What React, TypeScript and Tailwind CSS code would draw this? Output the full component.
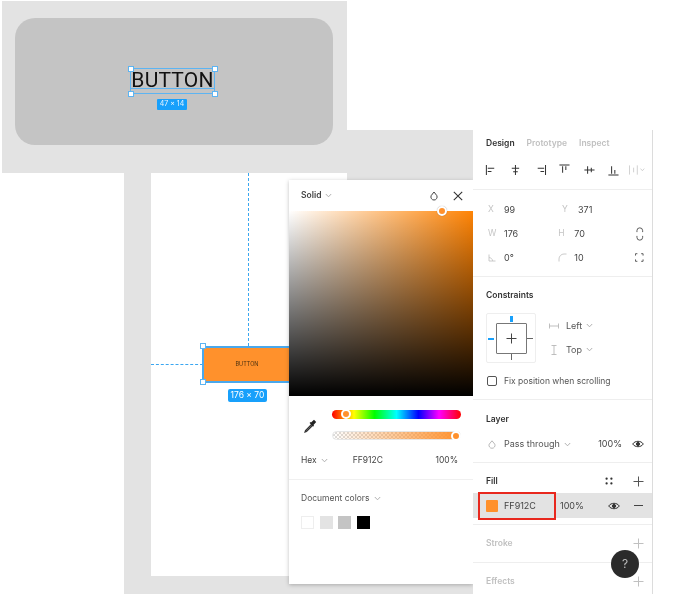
import React from "react";

const Chev = ({ className = "" }: { className?: string }) => (
  <svg width="7" height="5" viewBox="0 0 7 5" className={className} fill="none" stroke="#a8a8a8" strokeWidth="0.9">
    <path d="M0.8 1 L3.5 3.8 L6.2 1" />
  </svg>
);

const Handle = ({ className }: { className: string }) => (
  <div className={`absolute w-[6px] h-[6px] bg-white border border-[#5db4f2] ${className}`} />
);

const AlignIcon = ({ d }: { d: string }) => (
  <svg width="14" height="14" viewBox="0 0 14 14" fill="none" stroke="#333" strokeWidth="1.1">
    <path d={d} />
  </svg>
);

const Plus = ({ color = "#555" }: { color?: string }) => (
  <svg width="11" height="11" viewBox="0 0 11 11" fill="none" stroke={color} strokeWidth="1">
    <path d="M5.5 0.5V10.5M0.5 5.5H10.5" />
  </svg>
);

const Eye = () => (
  <svg width="12" height="8" viewBox="0 0 12 8" fill="none" stroke="#333" strokeWidth="1">
    <path d="M0.7 4 C3 0.4 9 0.4 11.3 4 C9 7.6 3 7.6 0.7 4Z" />
    <circle cx="6" cy="4" r="1.6" fill="#333" />
  </svg>
);

const Field = ({ label, value, icon }: { label?: string; value: string; icon?: React.ReactNode }) => (
  <div className="flex items-center w-[74px]">
    <span className="w-[16px] text-[8.5px] text-[#c4c4c4] flex items-center">{icon ?? label}</span>
    <span className="text-[9px] text-[#444]">{value}</span>
  </div>
);

function Panel() {
  return (
    <div className="absolute left-[473px] top-[130px] w-[180px] h-[464px] bg-white border-r border-[#dcdcdc] flex flex-col font-['Inter',sans-serif]">
      <section className="h-[60px] border-b border-[#eeeeee] pl-[13px] pr-[6px] pt-[7px]">
        <div className="flex gap-[12px] text-[8.5px] font-semibold leading-[12px]">
          <span className="text-[#333]">Design</span>
          <span className="text-[#c0c0c0]">Prototype</span>
          <span className="text-[#c0c0c0]">Inspect</span>
        </div>
        <div className="flex items-center mt-[14px] gap-[11.5px] -ml-[1px]">
          <AlignIcon d="M1.5 1.5V12.5M3 5H10M3 8.5H7" />
          <AlignIcon d="M7 1.5V12.5M3 5H11M4.5 9H9.5" />
          <AlignIcon d="M12.5 1.5V12.5M4 5H11M7 8.5H11" />
          <AlignIcon d="M1.5 1.5H12.5M5 3V10M8.5 3V7" />
          <AlignIcon d="M1.5 7H12.5M5 3V11M9 4.5V9.5" />
          <AlignIcon d="M1.5 12.5H12.5M5 3V11M8.5 7V11" />
          <svg width="18" height="12" viewBox="0 0 18 12" fill="none" stroke="#c8c8c8" strokeWidth="0.9" className="-ml-[2px]">
            <path d="M0.5 1V11M5 3.5V8.5M9 1V11M12.5 4.5L14.5 6.8L16.5 4.5" />
          </svg>
        </div>
      </section>
      <section className="h-[87px] border-b border-[#eeeeee] pl-[15px] pr-[8px] pt-[12px] flex flex-col gap-[9px] relative">
        <div className="flex h-[15px] gap-[0px]">
          <Field label="X" value="99" />
          <Field label="Y" value="371" />
        </div>
        <div className="flex h-[15px] items-center">
          <Field label="W" value="176" />
          <Field label="H" value="70" />
          <svg width="8" height="14" viewBox="0 0 8 14" fill="none" stroke="#555" strokeWidth="1" className="ml-[8px]">
            <path d="M1 5V3.5a3 3 0 0 1 6 0V5M1 9v1.5a3 3 0 0 0 6 0V9" />
          </svg>
        </div>
        <div className="flex h-[15px] items-center">
          <Field
            value="0°"
            icon={
              <svg width="8" height="8" viewBox="0 0 8 8" fill="none" stroke="#c4c4c4" strokeWidth="0.9">
                <path d="M1 0.5V7H7.5M1 3.5C3 3.7 4.4 5 4.7 7" />
              </svg>
            }
          />
          <Field
            value="10"
            icon={
              <svg width="9" height="9" viewBox="0 0 9 9" fill="none" stroke="#c4c4c4" strokeWidth="0.9">
                <path d="M1 8.5V6A5 5 0 0 1 6 1H8.5" />
              </svg>
            }
          />
          <svg width="9" height="9" viewBox="0 0 9 9" fill="none" stroke="#555" strokeWidth="1" className="ml-[7px]">
            <path d="M0.5 2.5V0.5H2.5M6.5 0.5H8.5V2.5M8.5 6.5V8.5H6.5M2.5 8.5H0.5V6.5" />
          </svg>
        </div>
      </section>
      <section className="h-[123px] border-b border-[#eeeeee] pl-[13px] pt-[12px]">
        <div className="text-[8.5px] font-semibold text-[#333] leading-[12px]">Constraints</div>
        <div className="flex mt-[12px]">
          <div className="relative w-[50px] h-[50px] border border-[#eeeeee] rounded-[2px] flex items-center justify-center">
            <div className="w-[31px] h-[31px] border border-[#777] rounded-[1px] flex items-center justify-center">
              <Plus color="#444" />
            </div>
            <div className="absolute left-[23px] top-[2px] w-[2.5px] h-[6px] bg-[#18a0fb]" />
            <div className="absolute left-[1px] top-[23.5px] w-[6px] h-[2px] bg-[#18a0fb]" />
            <div className="absolute left-[24px] bottom-[2px] w-[1px] h-[6px] bg-[#666]" />
            <div className="absolute right-[2px] top-[24px] w-[6px] h-[1px] bg-[#666]" />
          </div>
          <div className="ml-[13px] flex flex-col gap-[9px] pt-[5px] text-[9px] text-[#555]">
            <div className="flex items-center h-[15px]">
              <svg width="10" height="6" viewBox="0 0 10 6" fill="none" stroke="#b8b8b8" strokeWidth="0.9" className="mr-[7px]">
                <path d="M0.5 0.5V5.5M9.5 0.5V5.5M0.5 3H9.5" />
              </svg>
              <span className="mr-[4px]">Left</span>
              <Chev />
            </div>
            <div className="flex items-center h-[15px]">
              <svg width="6" height="10" viewBox="0 0 6 10" fill="none" stroke="#b8b8b8" strokeWidth="0.9" className="ml-[2px] mr-[9px]">
                <path d="M0.5 0.5H5.5M0.5 9.5H5.5M3 0.5V9.5" />
              </svg>
              <span className="mr-[4px]">Top</span>
              <Chev />
            </div>
          </div>
        </div>
        <div className="flex items-center mt-[10px] h-[16px]">
          <div className="w-[10px] h-[10px] border border-[#555] rounded-[2px] ml-[1px] mr-[7px]" />
          <span className="text-[8.5px] text-[#555]">Fix position when scrolling</span>
        </div>
      </section>
      <section className="h-[63px] border-b border-[#eeeeee] pl-[13px] pr-[8px] pt-[13px]">
        <div className="text-[8.5px] font-semibold text-[#333] leading-[12px]">Layer</div>
        <div className="flex items-center mt-[12px] h-[14px] text-[9px] text-[#555]">
          <svg width="8" height="9" viewBox="0 0 8 9" fill="none" stroke="#b0b0b0" strokeWidth="0.9" className="ml-[2px] mr-[8px]">
            <path d="M4 0.8L6.8 4.2A3 3 0 1 1 1.2 4.2Z" />
          </svg>
          <span className="mr-[4px]">Pass through</span>
          <Chev />
          <span className="ml-auto mr-[10px] text-[#444]">100%</span>
          <Eye />
        </div>
      </section>
      <section className="h-[62px] border-b border-[#eeeeee] pt-[11px]">
        <div className="flex items-center h-[14px] pl-[13px] pr-[8px]">
          <span className="text-[8.5px] font-semibold text-[#333]">Fill</span>
          <svg width="8" height="8" viewBox="0 0 8 8" fill="#333" className="ml-auto mr-[20px]">
            <rect x="0.5" y="0.5" width="2.2" height="2.2" rx="1" />
            <rect x="5.3" y="0.5" width="2.2" height="2.2" rx="1" />
            <rect x="0.5" y="5.3" width="2.2" height="2.2" rx="1" />
            <rect x="5.3" y="5.3" width="2.2" height="2.2" rx="1" />
          </svg>
          <Plus />
        </div>
        <div className="flex items-center h-[25px] mt-[5px] bg-[#e3e3e3] pl-[13px] pr-[8px] text-[9px] text-[#444]">
          <div className="w-[12px] h-[12px] bg-[#ff912c] rounded-[1px] mr-[6px]" />
          <span className="w-[56px]">FF912C</span>
          <span>100%</span>
          <div className="ml-auto mr-[14px]">
            <Eye />
          </div>
          <div className="w-[9px] h-[1px] bg-[#444] mr-[1px]" />
        </div>
      </section>
      <section className="h-[38px] border-b border-[#eeeeee] pl-[13px] pr-[8px] flex items-center">
        <span className="text-[8.5px] font-semibold text-[#c0c0c0]">Stroke</span>
        <div className="ml-auto flex">
          <Plus color="#c0c0c0" />
        </div>
      </section>
      <section className="flex-1 pl-[13px] pr-[8px] pt-[6px] flex items-center">
        <span className="text-[8.5px] font-semibold text-[#c0c0c0]">Effects</span>
        <div className="ml-auto flex">
          <Plus color="#c0c0c0" />
        </div>
      </section>
      <div className="absolute left-[5px] top-[362px] w-[78px] h-[28px] border-2 border-[#e8281e]" />
      <div className="absolute left-[138px] top-[420px] w-[28px] h-[28px] rounded-full bg-[#2b2b2b] flex items-center justify-center text-[12px] text-[#bdbdbd]">
        ?
      </div>
    </div>
  );
}

function Picker() {
  return (
    <div className="absolute left-[289px] top-[180px] w-[184px] h-[404px] bg-white shadow-[0_1px_4px_rgba(0,0,0,0.25)] flex flex-col font-['Inter',sans-serif]">
      <div className="h-[31px] flex items-center pl-[12px] pr-[10px]">
        <span className="text-[8.5px] font-semibold text-[#444] mr-[4px]">Solid</span>
        <Chev />
        <svg width="8" height="10" viewBox="0 0 8 10" fill="none" stroke="#444" strokeWidth="1" className="ml-auto mr-[15px]">
          <path d="M4 1L6.8 4.6A3.1 3.1 0 1 1 1.2 4.6Z" />
        </svg>
        <svg width="10" height="10" viewBox="0 0 10 10" fill="none" stroke="#333" strokeWidth="1.1">
          <path d="M0.8 0.8L9.2 9.2M9.2 0.8L0.8 9.2" />
        </svg>
      </div>
      <div className="relative h-[185px] bg-[linear-gradient(to_bottom,transparent,#000),linear-gradient(to_right,#ffffff,#ff8405)]">
        <div className="absolute left-[148px] -top-[5px] w-[10px] h-[10px] rounded-full bg-[#ff912c] border-2 border-white shadow-[0_0_1px_rgba(0,0,0,0.4)]" />
      </div>
      <div className="flex h-[56px] pl-[14px] pr-[12px]">
        <div className="w-[29px] flex items-center pt-[3px]">
          <svg width="14" height="14" viewBox="0 0 14 14" fill="none">
            <path d="M9 5L2.5 11.5L2 13L3.5 12.5L10 6" stroke="#333" strokeWidth="1.2" />
            <path d="M8 3.5L11 0.8L13.2 3L10.5 6L11 7L10 7.6L6.6 4L7.4 3Z" fill="#222" />
          </svg>
        </div>
        <div className="flex-1 flex flex-col gap-[12px] pt-[14px]">
          <div className="relative h-[9px] rounded-full bg-[linear-gradient(to_right,#ff0000,#ffff00_17%,#00ff00_33%,#00ffff_50%,#0000ff_67%,#ff00ff_83%,#ff0000)]">
            <div className="absolute left-[9px] -top-[1px] w-[10px] h-[10px] rounded-full bg-[#ff912c] border-2 border-white" />
          </div>
          <div className="relative h-[9px] rounded-full border border-[#e6e6e6] bg-[linear-gradient(to_right,transparent,#ff912c),repeating-conic-gradient(#dcdcdc_0_25%,#ffffff_0_50%)] [background-size:100%_100%,4px_4px]">
            <div className="absolute -right-[1px] -top-[1px] w-[10px] h-[10px] rounded-full bg-[#ff912c] border-2 border-white" />
          </div>
        </div>
      </div>
      <div className="flex items-center h-[17px] pl-[12px] pr-[15px] text-[8.5px] text-[#444]">
        <span className="mr-[4px]">Hex</span>
        <Chev />
        <span className="ml-[25px]">FF912C</span>
        <span className="ml-auto">100%</span>
      </div>
      <div className="h-[1px] bg-[#f0f0f0] mt-[10px]" />
      <div className="flex items-center h-[14px] mt-[11px] pl-[12px] text-[8.5px] text-[#555]">
        <span className="mr-[4px]">Document colors</span>
        <Chev />
      </div>
      <div className="flex gap-[5.5px] mt-[11px] pl-[12px]">
        <div className="w-[13px] h-[13px] bg-white border border-[#eeeeee]" />
        <div className="w-[13px] h-[13px] bg-[#e3e3e3]" />
        <div className="w-[13px] h-[13px] bg-[#c4c4c4]" />
        <div className="w-[13px] h-[13px] bg-black" />
      </div>
    </div>
  );
}

export default function App() {
  return (
    <div className="relative w-[675px] h-[609px] bg-white overflow-hidden font-['Inter',sans-serif] blur-[0.4px]">
      {/* lower canvas */}
      <div className="absolute left-[124px] top-[130px] w-[350px] h-[464px] bg-[#e3e3e3]">
        <div className="absolute left-[27px] top-[43px] w-[196px] h-[403px] bg-white" />
        <div className="absolute left-[124px] top-[43px] h-[173px] border-l border-dashed border-[#3ba6f0]" />
        <div className="absolute left-[27px] top-[234px] w-[52px] border-t border-dashed border-[#3ba6f0]" />
        <div className="absolute left-[78px] top-[216px] w-[90px] h-[37px] bg-[#ff912c] border-2 border-[#4aa8ec] flex items-center justify-center text-[5.5px] text-[#4a3010]">
          BUTTON
        </div>
        <Handle className="left-[76px] top-[213px]" />
        <Handle className="left-[76px] top-[249px]" />
        <div className="absolute left-[104px] top-[259px] w-[39px] h-[13px] rounded-[2px] bg-[#18a0fb] text-white text-[8.5px] flex items-center justify-center">
          176 × 70
        </div>
      </div>

      {/* top frame */}
      <div className="absolute left-[2px] top-[1px] w-[345px] h-[172px] bg-[#e3e3e3] p-[13px] pt-[17px] pb-[28px]">
        <div className="relative w-[318px] h-[127px] rounded-[20px] bg-[#c4c4c4]">
          <div className="absolute left-[115px] top-[50px] w-[85px] h-[26px] border border-[#5db4f2]">
            <div className="h-[20px] pt-[3px] border-b border-[#5db4f2] flex items-center justify-center text-[21px] leading-none text-[#111] tracking-[0.2px] font-['Roboto',sans-serif]">
              BUTTON
            </div>
          </div>
          <Handle className="left-[112.5px] top-[48px]" />
          <Handle className="left-[197px] top-[48px]" />
          <Handle className="left-[112.5px] top-[73px]" />
          <Handle className="left-[197px] top-[73px]" />
          <div className="absolute left-[142px] top-[81px] w-[30px] h-[11px] rounded-[1px] bg-[#18a0fb] text-[#e6f4ff] text-[7px] flex items-center justify-center">
            47 × 14
          </div>
        </div>
      </div>

      <Picker />
      <Panel />
    </div>
  );
}
